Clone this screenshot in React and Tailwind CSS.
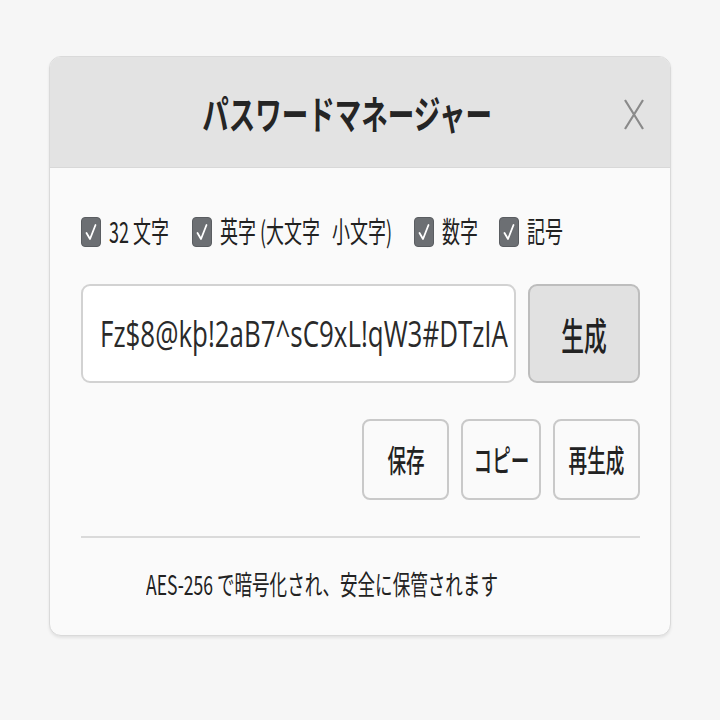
import React from "react";

const JP = { fontFamily: '"Noto Sans CJK JP", "Noto Sans", sans-serif' };
const LAT = { fontFamily: '"Open Sans", "Noto Sans CJK JP", sans-serif' };

function Check() {
  return (
    <span className="inline-flex items-center justify-center w-[20px] h-[30px] rounded-[4px] bg-[#6c6f73] border border-[#5a5d61]">
      <svg width="14" height="20" viewBox="0 0 14 20" fill="none">
        <path d="M2.5 11 L6 17 L11.5 3" stroke="white" strokeWidth="1.8" strokeLinecap="round" strokeLinejoin="round" />
      </svg>
    </span>
  );
}

function Opt({ label, w }) {
  return (
    <div className="flex items-center">
      <Check />
      <span className="ml-[8px] whitespace-pre" style={{ width: w }}>
        <span className="inline-block origin-left scale-x-[0.62] text-[29px] leading-none text-[#222]" style={JP}>{label}</span>
      </span>
    </div>
  );
}

function SmallBtn({ children, w }) {
  return (
    <button className="h-[81px] rounded-[8px] border-2 border-[#c9c9c9] bg-[#fafafa] flex items-center justify-center" style={{ width: w }}>
      <span className="inline-block scale-x-[0.6] text-[31px] font-medium text-[#222] whitespace-nowrap" style={JP}>{children}</span>
    </button>
  );
}

export default function App() {
  return (
    <div className="w-[720px] h-[720px] bg-[#f6f6f6] pt-[56px] pl-[49px]">
      <div className="w-[622px] h-[580px] rounded-[12px] border border-[#dadada] bg-[#fafafa] overflow-hidden shadow-[0_2px_3px_rgba(0,0,0,0.08)]">
        <div className="relative h-[111px] bg-[#e3e3e3] border-b border-[#d8d8d8] flex items-center justify-center">
          <span className="inline-block ml-[-26px] scale-x-[0.68] text-[39px] font-bold text-[#252525] whitespace-nowrap" style={JP}>パスワードマネージャー</span>
          <svg className="absolute right-[25px] top-[42px]" width="22" height="31" viewBox="0 0 22 31">
            <path d="M2 1 L20 30 M20 1 L2 30" stroke="#8a8a8a" strokeWidth="2.2" />
          </svg>
        </div>
        <div className="pl-[31px] pr-[30px]">
          <div className="mt-[49px] flex items-center h-[30px]">
            <Opt label="32 文字" w={83} />
            <Opt label="英字 (大文字   小文字)" w={194} />
            <Opt label="数字" w={57} />
            <Opt label="記号" w={40} />
          </div>
          <div className="mt-[37px] flex gap-[12px]">
            <div className="w-[435px] h-[99px] rounded-[9px] border-2 border-[#d2d2d2] bg-white flex items-center pl-[17px] overflow-hidden">
              <span className="inline-block origin-left scale-x-[0.72] text-[36px] font-medium text-[#2a2a2a] whitespace-nowrap" style={LAT}>Fz$8@kþ!2aB7^sC9xL!qW3#DTzIA</span>
            </div>
            <button className="w-[112px] h-[99px] rounded-[9px] border-2 border-[#bdbdbd] bg-[#e1e1e1] flex items-center justify-center">
              <span className="inline-block scale-x-[0.6] text-[38px] font-medium text-[#222]" style={JP}>生成</span>
            </button>
          </div>
          <div className="mt-[36px] flex justify-end gap-[12px]">
            <SmallBtn w={87}>保存</SmallBtn>
            <SmallBtn w={80}>コピー</SmallBtn>
            <SmallBtn w={87}>再生成</SmallBtn>
          </div>
          <div className="mt-[36px] h-[2px] bg-[#dadada]" />
          <div className="mt-[26px] pl-[65px] whitespace-nowrap">
            <span className="inline-block origin-left scale-x-[0.65] text-[27px] text-[#222]" style={JP}>AES-256 で暗号化され、安全に保管されます</span>
          </div>
        </div>
      </div>
    </div>
  );
}
